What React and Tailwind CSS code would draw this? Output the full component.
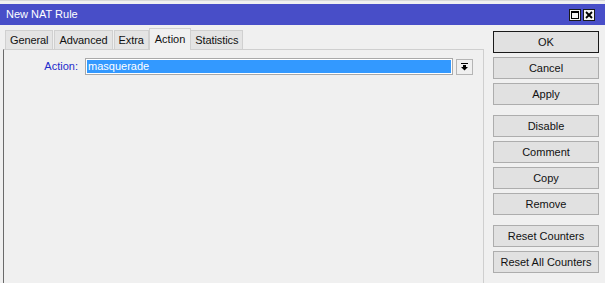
import React from "react";

const Btn = ({ children, def }) => (
  <div
    className={`h-[22px] w-[106px] flex items-center justify-center bg-[#e1e1e1] text-[11px] text-[#111] border ${
      def ? "border-[#1a1a1a]" : "border-[#adadad]"
    }`}
  >
    {children}
  </div>
);

const tabs = ["General", "Advanced", "Extra", "Action", "Statistics"];

export default function App() {
  return (
    <div
      className="w-[605px] h-[283px] bg-[#f0f0f0] overflow-hidden flex flex-col"
      style={{ fontFamily: '"Liberation Sans", Arial, sans-serif' }}
    >
      <div className="h-[4px] bg-[#f0f0f0] border-t border-[#d8d8d8]" />
      <div className="h-[21px] bg-[#484ec8] flex items-center justify-between pl-[6px] pr-[10px]">
        <span className="text-white text-[11px] leading-none">New NAT Rule</span>
        <div className="flex gap-[2px]">
          <div className="w-[12px] h-[12px] bg-[#f4f4f4] border border-[#1a1a1a] flex items-center justify-center">
            <div className="w-[8px] h-[8px] border border-black border-t-2" />
          </div>
          <div className="w-[12px] h-[12px] bg-[#f4f4f4] border border-[#1a1a1a] flex items-center justify-center">
            <svg width="8" height="8" viewBox="0 0 8 8">
              <path d="M1 1 L7 7 M7 1 L1 7" stroke="black" strokeWidth="1.8" />
            </svg>
          </div>
        </div>
      </div>
      <div className="flex flex-1">
        <div className="w-[484px] flex flex-col pl-[3px] pt-[3px]">
          <div className="flex items-end h-[22px] pl-[2px]">
            {tabs.map((t) =>
              t === "Action" ? (
                <div
                  key={t}
                  className="h-[22px] px-[5px] -mx-[1px] bg-[#f0f0f0] border border-b-0 border-[#d0d0d0] flex items-center text-[11px] text-[#111] relative z-10"
                >
                  {t}
                </div>
              ) : (
                <div
                  key={t}
                  className="h-[20px] px-[4px] mr-[1px] bg-[#e4e4e4] border border-b-0 border-[#d0d0d0] flex items-center text-[11px] text-[#111] tracking-[-0.1px]"
                >
                  {t}
                </div>
              )
            )}
          </div>
          <div className="flex-1 border-t border-r border-l border-[#cfcfcf] -mt-[1px] border-l-[#6a6a6a] pt-[8px]">
            <div className="flex items-center h-[17px]">
              <span className="w-[78px] text-right pr-[4px] text-[11px] text-[#1c2ccc]">Action:</span>
              <div className="ml-[3px] w-[368px] h-[17px] border border-[#a9a9a9] bg-white p-[1px] flex">
                <div className="flex-1 bg-[#3399ff] text-white text-[11px] leading-[13px] pl-[1px]">
                  masquerade
                </div>
              </div>
              <div className="ml-[3px] w-[17px] h-[16px] border border-[#b5b5b5] bg-[#f0f0f0] flex items-center justify-center">
                <svg width="7" height="8" viewBox="0 0 7 8">
                  <rect x="0" y="0" width="7" height="1" fill="black" />
                  <rect x="2" y="2" width="3" height="2" fill="black" />
                  <path d="M0 4 L7 4 L3.5 7.5 Z" fill="black" />
                </svg>
              </div>
            </div>
          </div>
        </div>
        <div className="flex flex-col pl-[9px] pt-[6px]">
          <div className="flex flex-col gap-[4px]">
            <Btn def>OK</Btn>
            <Btn>Cancel</Btn>
            <Btn>Apply</Btn>
          </div>
          <div className="flex flex-col gap-[4px] mt-[10px]">
            <Btn>Disable</Btn>
            <Btn>Comment</Btn>
            <Btn>Copy</Btn>
            <Btn>Remove</Btn>
          </div>
          <div className="flex flex-col gap-[4px] mt-[10px]">
            <Btn>Reset Counters</Btn>
            <Btn>Reset All Counters</Btn>
          </div>
        </div>
      </div>
    </div>
  );
}
